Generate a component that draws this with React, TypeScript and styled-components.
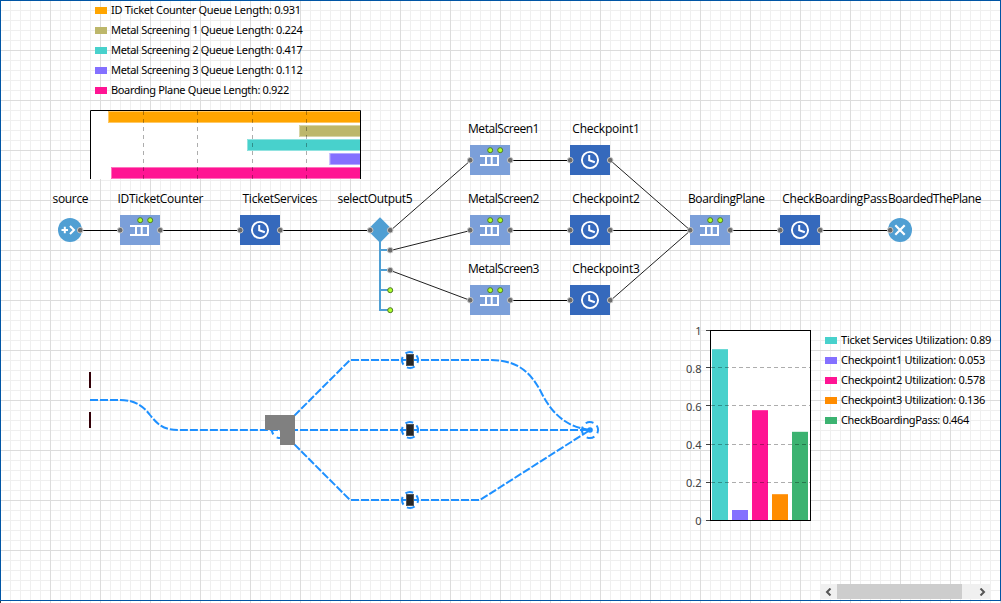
import React from "react";
import styled, { createGlobalStyle } from "styled-components";

const GlobalStyle = createGlobalStyle`
  html, body { margin: 0; padding: 0; background: #fff; overflow: hidden; }
`;

const Canvas = styled.main`
  position: relative;
  width: 1001px;
  height: 603px;
  overflow: hidden;
  background-color: #fff;
  background-image:
    linear-gradient(to right, #dcdcdc 1px, transparent 1px),
    linear-gradient(to bottom, #dcdcdc 1px, transparent 1px),
    linear-gradient(to right, #efefef 1px, transparent 1px),
    linear-gradient(to bottom, #efefef 1px, transparent 1px);
  background-size: 50px 50px, 50px 50px, 10px 10px, 10px 10px;
`;

const Frame = styled.div`
  position: absolute;
  inset: 0 0 2px 0;
  box-sizing: border-box;
  border: 1px solid #0055a5;
  pointer-events: none;
`;

const Drawing = styled.svg`
  position: absolute;
  inset: 0;
  display: block;
`;

const NodeLabel = styled.span<{ $x: number; $y: number; $spacing: number }>`
  position: absolute;
  left: ${(p) => p.$x}px;
  top: ${(p) => p.$y}px;
  font: 12px/16px "Open Sans", sans-serif;
  letter-spacing: ${(p) => p.$spacing}px;
  white-space: nowrap;
  color: #000;
`;

const Legend = styled.ul<{ $x: number; $y: number }>`
  position: absolute;
  left: ${(p) => p.$x}px;
  top: ${(p) => p.$y}px;
  display: flex;
  flex-direction: column;
  margin: 0;
  padding: 0;
  list-style: none;
`;

const LegendRow = styled.li`
  display: flex;
  align-items: center;
  gap: 4px;
  height: 20px;
`;

const Swatch = styled.i<{ $color: string }>`
  width: 12px;
  height: 7px;
  margin-top: 1px;
  background: ${(p) => p.$color};
`;

const LegendText = styled.span<{ $spacing: number }>`
  font: 11px/20px "Noto Sans", sans-serif;
  letter-spacing: ${(p) => p.$spacing}px;
  white-space: nowrap;
  color: #000;
`;

const Axis = styled.div`
  position: absolute;
  left: 680px;
  top: 321px;
  width: 21.5px;
  height: 210px;
  display: flex;
  flex-direction: column;
  justify-content: space-between;
  text-align: right;
  font: 11px/20px "Noto Sans", sans-serif;
  color: #404040;
`;

const ScrollBar = styled.div`
  position: absolute;
  left: 820px;
  top: 584px;
  width: 171px;
  height: 15px;
  display: flex;
  background: #f0f0f0;
`;

const ScrollButton = styled.div<{ $width: number }>`
  width: ${(p) => p.$width}px;
  display: flex;
  align-items: center;
  justify-content: center;
`;

const ScrollThumb = styled.div`
  width: 125px;
  background: #cdcdcd;
`;

const queueStats = [
  { label: "ID Ticket Counter Queue Length: 0.931", color: "#ffa500", x: 108, spacing: -0.28 },
  { label: "Metal Screening 1 Queue Length: 0.224", color: "#bdb76b", x: 299, spacing: -0.31 },
  { label: "Metal Screening 2 Queue Length: 0.417", color: "#48d1cc", x: 247, spacing: -0.31 },
  { label: "Metal Screening 3 Queue Length: 0.112", color: "#8470ff", x: 329.5, spacing: -0.31 },
  { label: "Boarding Plane Queue Length: 0.922", color: "#ff1493", x: 111, spacing: -0.34 },
];

const utilization = [
  { label: "Ticket Services Utilization: 0.89", color: "#48d1cc", y: 349.2, spacing: -0.23 },
  { label: "Checkpoint1 Utilization: 0.053", color: "#8470ff", y: 510, spacing: -0.31 },
  { label: "Checkpoint2 Utilization: 0.578", color: "#ff1493", y: 410.2, spacing: -0.31 },
  { label: "Checkpoint3 Utilization: 0.136", color: "#ff8c00", y: 494.2, spacing: -0.31 },
  { label: "CheckBoardingPass: 0.464", color: "#3cb371", y: 431.8, spacing: -0.33 },
];

const labels: [string, number, number, number][] = [
  ["source", 52.5, 199, -0.33],
  ["IDTicketCounter", 117.5, 199, -0.3],
  ["TicketServices", 242.5, 199, -0.25],
  ["selectOutput5", 337.5, 199, -0.33],
  ["MetalScreen1", 468, 129, -0.45],
  ["MetalScreen2", 468, 199, -0.45],
  ["MetalScreen3", 468, 269, -0.45],
  ["Checkpoint1", 572.3, 129, -0.22],
  ["Checkpoint2", 572.3, 199, -0.22],
  ["Checkpoint3", 572.3, 269, -0.22],
  ["BoardingPlane", 688, 199, -0.4],
  ["CheckBoardingPass", 782.3, 199, -0.29],
  ["BoardedThePlane", 888, 199, -0.45],
];

const Port = ({ x, y }: { x: number; y: number }) => (
  <circle cx={x + 0.2} cy={y + 0.2} r="2.8" fill="#6b6b6b" stroke="#c9c9c9" strokeWidth="1" />
);

const OpenPort = ({ x, y }: { x: number; y: number }) => (
  <circle cx={x} cy={y} r="2.5" fill="#adff2f" stroke="#4f7a2a" strokeWidth="1" />
);

const Queue = ({ x, y }: { x: number; y: number }) => (
  <g transform={`translate(${x} ${y})`}>
    <rect x="-20" y="-15" width="40" height="30" fill="#7b9fd9" />
    <path d="M-10 -4H9M-10 5H9M-4 -5V6M1.7 -5V6M8 -5V6" fill="none" stroke="#fff" strokeWidth="2" />
    <OpenPort x={0.2} y={-9.8} />
    <OpenPort x={10.2} y={-9.8} />
    <Port x={-20} y={0} />
    <Port x={20} y={0} />
  </g>
);

const Delay = ({ x, y }: { x: number; y: number }) => (
  <g transform={`translate(${x} ${y})`}>
    <rect x="-20" y="-15" width="40" height="30" fill="#3569bc" />
    <circle r="8.1" fill="none" stroke="#fff" strokeWidth="1.9" />
    <path d="M-0.8 -5V0.2L4.8 2.2" fill="none" stroke="#fff" strokeWidth="2" />
    <Port x={-20} y={0} />
    <Port x={20} y={0} />
  </g>
);

const Wire = styled.path<{ $color?: string }>`
  fill: none;
  stroke: ${(p) => p.$color ?? "#202020"};
  stroke-width: 1;
`;

const Track = styled.path`
  fill: none;
  stroke: #1e90ff;
  stroke-width: 2;
  stroke-dasharray: 8 2;
`;

const Ring = styled.circle`
  fill: none;
  stroke: #1e90ff;
  stroke-width: 2;
  stroke-dasharray: 8 4.566;
`;

const GridLine = styled.path`
  fill: none;
  stroke: #000;
  stroke-opacity: 0.32;
  stroke-width: 1;
`;

const Flowchart = () => (
  <g>
    <Wire
      $color="#000"
      d="M80 230.5H120M160 230.5H240M280 230.5H370M510 160.5H570M510 230.5H570M510 300.5H570M610 230.5H690M730 230.5H780M820 230.5H890"
    />
    <Wire d="M390.5 230.5L470.5 160.5M390.5 250.5L470.5 230.5M390.5 270.5L470.5 300.5M610.5 160.5L690.5 230.5M610.5 300.5L690.5 230.5" />
    <circle cx="70" cy="230" r="12" fill="#509fd3" />
    <path d="M61.5 230H68M64.8 226.7V233.3M70 226L74 230L70 234" fill="none" stroke="#fff" strokeWidth="2" />
    <Port x={80} y={230} />
    <path d="M380 217.3L392.7 230L380 242.7L367.3 230Z" fill="#509fd3" />
    <path d="M380 240V310H388M380 250H388M380 270H388M380 290H388" fill="none" stroke="#509fd3" strokeWidth="2" />
    <Port x={370} y={230} />
    <Port x={390} y={230} />
    <Port x={390} y={250} />
    <Port x={390} y={270} />
    <OpenPort x={390.2} y={290.2} />
    <OpenPort x={390.2} y={310.2} />
    <Queue x={140} y={230} />
    <Delay x={260} y={230} />
    {[160, 230, 300].map((y) => (
      <g key={y}>
        <Queue x={490} y={y} />
        <Delay x={590} y={y} />
      </g>
    ))}
    <Queue x={710} y={230} />
    <Delay x={800} y={230} />
    <circle cx="900" cy="230" r="12" fill="#509fd3" />
    <path d="M895.3 225.3L904.7 234.7M904.7 225.3L895.3 234.7" stroke="#fff" strokeWidth="2.2" />
    <Port x={890} y={230} />
  </g>
);

const WalkingPaths = () => (
  <g>
    <path d="M90 372V388M90 412V428" stroke="#330008" strokeWidth="2" />
    <Track d="M90 400H120C136 400 144 407 150 415C158 425 164 430 178 430H280" />
    <Track d="M280 430H590" />
    <Track d="M280 430L350 360H490C520 360 532 375 541 392C551 412 565 427 590 430" />
    <Track d="M280 430L350 500H480L590 430" />
    <Ring cx="280" cy="430" r="8" transform="rotate(-34 280 430)" />
    <path d="M265 415H295V445H280V430H265Z" fill="#808080" />
    {[360, 430, 500].map((y) => (
      <g key={y}>
        <Ring cx="410" cy={y} r="8" transform={`rotate(-36 410 ${y})`} />
        <rect x="406.5" y={y - 5.5} width="7" height="11" fill="#262626" stroke="#555" />
      </g>
    ))}
    <Ring cx="590" cy="430" r="8" transform="rotate(-34 590 430)" />
    <circle cx="590" cy="430" r="2.8" fill="#1e90ff" />
  </g>
);

const QueueChart = () => (
  <g>
    <rect x="90" y="110" width="271" height="69" fill="#fff" />
    {queueStats.map((s, i) => (
      <g key={s.label}>
        <rect x={s.x} y={111 + i * 14} width={360 - s.x} height="12" fill={s.color} />
        <path
          d={`M360 ${111.5 + i * 14}H${s.x + 0.5}V${122.5 + i * 14}H360`}
          fill="none"
          stroke="#fff"
          strokeOpacity="0.4"
        />
      </g>
    ))}
    <GridLine d="M143.5 111V179M197.5 111V179M252.5 111V179M306.5 111V179" strokeDasharray="4 4" />
    <path d="M90.5 179V110.5H360.5V179" fill="none" stroke="#000" />
  </g>
);

const UtilizationChart = () => (
  <g>
    <rect x="710" y="330" width="101" height="191" fill="#fff" />
    {utilization.map((s, i) => (
      <rect key={s.label} x={712 + i * 20} y={s.y} width="16" height={520 - s.y} fill={s.color} />
    ))}
    <GridLine d="M711 367.5H810M711 405.5H810M711 444.5H810M711 482.5H810" strokeDasharray="4 3" />
    <path d="M706 330.5H710M706 367.5H710M706 405.5H710M706 444.5H710M706 482.5H710M706 520.5H710" stroke="#404040" />
    <rect x="710.5" y="330.5" width="100" height="190" fill="none" stroke="#000" />
  </g>
);

export default function App() {
  return (
    <>
      <GlobalStyle />
      <Canvas>
        <Drawing width="1001" height="603" viewBox="0 0 1001 603">
          <QueueChart />
          <Flowchart />
          <WalkingPaths />
          <UtilizationChart />
          <path d="M0.5 601V603" stroke="#404040" />
        </Drawing>
        {labels.map(([text, x, y, spacing]) => (
          <NodeLabel key={text} $x={x} $y={y - 8} $spacing={spacing}>
            {text}
          </NodeLabel>
        ))}
        <Legend $x={95} $y={0}>
          {queueStats.map((s) => (
            <LegendRow key={s.label}>
              <Swatch $color={s.color} />
              <LegendText $spacing={s.spacing}>{s.label}</LegendText>
            </LegendRow>
          ))}
        </Legend>
        <Legend $x={825} $y={330}>
          {utilization.map((s) => (
            <LegendRow key={s.label}>
              <Swatch $color={s.color} />
              <LegendText $spacing={s.spacing}>{s.label}</LegendText>
            </LegendRow>
          ))}
        </Legend>
        <Axis>
          {["1", "0.8", "0.6", "0.4", "0.2", "0"].map((t) => (
            <span key={t}>{t}</span>
          ))}
        </Axis>
        <ScrollBar>
          <ScrollButton $width={17}>
            <svg width="7" height="8" viewBox="0 0 7 8">
              <path d="M5.5 0.5L2 4L5.5 7.5" fill="none" stroke="#555" strokeWidth="2" />
            </svg>
          </ScrollButton>
          <ScrollThumb />
          <ScrollButton $width={12} />
          <ScrollButton $width={17}>
            <svg width="7" height="8" viewBox="0 0 7 8">
              <path d="M1.5 0.5L5 4L1.5 7.5" fill="none" stroke="#555" strokeWidth="2" />
            </svg>
          </ScrollButton>
        </ScrollBar>
        <Frame />
      </Canvas>
    </>
  );
}
